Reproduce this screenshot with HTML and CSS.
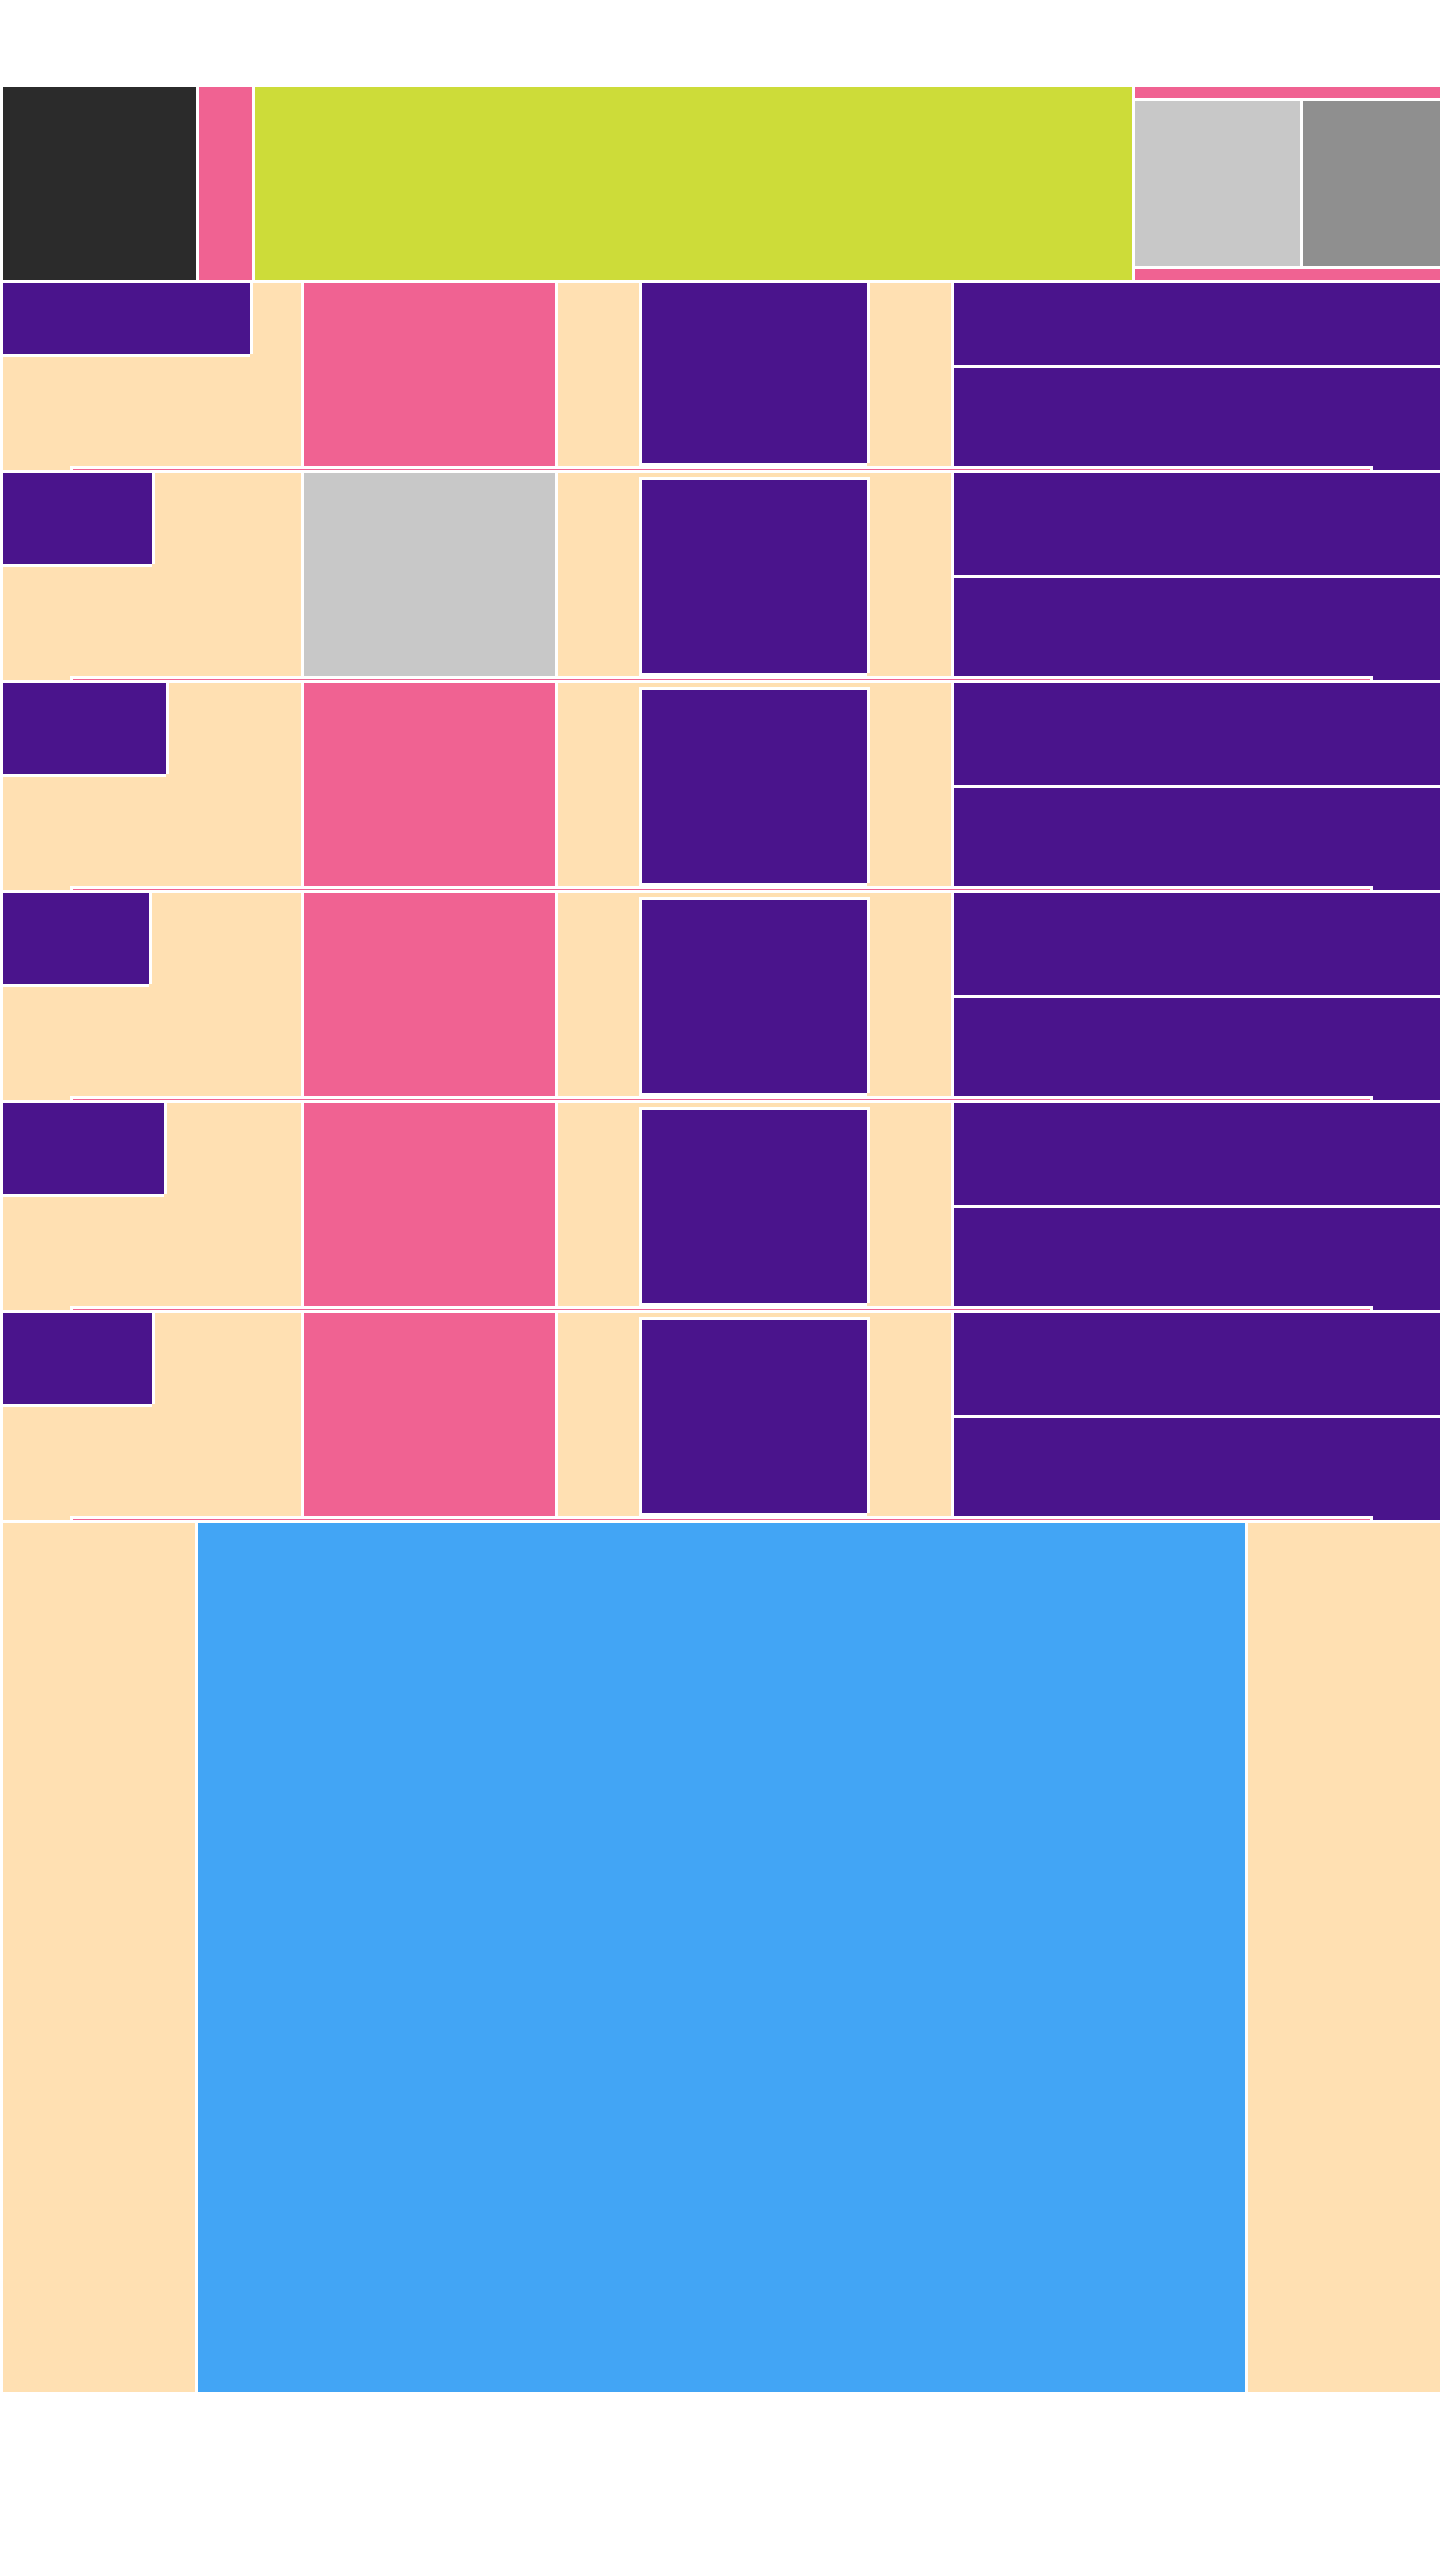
FILE: index.html
```html
<!DOCTYPE html>
<html lang="en">
<head>
  <meta charset="UTF-8">
  <meta name="viewport" content="width=device-width, initial-scale=1.0">
  <title>Board</title>
  <link rel="stylesheet" href="styles.css">
</head>
<body>
  <header class="header">
    <div class="logo"></div>
    <div class="tab"></div>
    <div class="banner"></div>
    <div class="side">
      <div class="side-bar"></div>
      <div class="side-thumbs">
        <div class="thumb-light"></div>
        <div class="thumb-dark"></div>
      </div>
      <div class="side-bar"></div>
    </div>
  </header>

  <main class="list">
    <div class="row row-first">
      <div class="info"><div class="tag tag-1"></div></div>
      <div class="thumb"></div>
      <div class="media-cell"><div class="media"></div></div>
      <div class="meta"><div class="meta-top"></div><div class="meta-bottom"></div></div>
      <div class="divider"></div>
    </div>
    <div class="row">
      <div class="info"><div class="tag tag-2"></div></div>
      <div class="thumb thumb-empty"></div>
      <div class="media-cell"><div class="media"></div></div>
      <div class="meta"><div class="meta-top"></div><div class="meta-bottom"></div></div>
      <div class="divider"></div>
    </div>
    <div class="row">
      <div class="info"><div class="tag tag-3"></div></div>
      <div class="thumb"></div>
      <div class="media-cell"><div class="media"></div></div>
      <div class="meta"><div class="meta-top"></div><div class="meta-bottom"></div></div>
      <div class="divider"></div>
    </div>
    <div class="row">
      <div class="info"><div class="tag tag-4"></div></div>
      <div class="thumb"></div>
      <div class="media-cell"><div class="media"></div></div>
      <div class="meta"><div class="meta-top"></div><div class="meta-bottom"></div></div>
      <div class="divider"></div>
    </div>
    <div class="row">
      <div class="info"><div class="tag tag-5"></div></div>
      <div class="thumb"></div>
      <div class="media-cell"><div class="media"></div></div>
      <div class="meta"><div class="meta-top"></div><div class="meta-bottom"></div></div>
      <div class="divider"></div>
    </div>
    <div class="row">
      <div class="info"><div class="tag tag-2"></div></div>
      <div class="thumb"></div>
      <div class="media-cell"><div class="media"></div></div>
      <div class="meta"><div class="meta-top"></div><div class="meta-bottom"></div></div>
      <div class="divider"></div>
    </div>
  </main>

  <footer class="footer">
    <div class="footer-side"></div>
    <div class="footer-main"></div>
    <div class="footer-side footer-fill"></div>
  </footer>
</body>
</html>
```

FILE: styles.css
```css
body {
  margin: 0;
  padding: 87px 0 0 3px;
  background-color: #ffffff;
  font-family: "Liberation Sans", Arial, sans-serif;
}

/* header */
.header {
  display: flex;
  gap: 3px;
  height: 193px;
  margin-bottom: 3px;
}

.logo {
  width: 193px;
  background: #2b2b2b;
}

.tab {
  width: 53px;
  background: #f06292;
}

.banner {
  width: 877px;
  background: #cddc39;
}

.side {
  flex: 1;
  display: flex;
  flex-direction: column;
  gap: 3px;
}

.side-bar {
  height: 11px;
  background: #f06292;
}

.side-thumbs {
  flex: 1;
  display: flex;
  gap: 3px;
}

.thumb-light {
  width: 165px;
  background: #c8c8c8;
}

.thumb-dark {
  flex: 1;
  background: #8f8f8f;
}

/* rows */
.list {
  display: flex;
  flex-direction: column;
  gap: 3px;
  margin-bottom: 3px;
}

.row {
  position: relative;
  display: flex;
  gap: 3px;
  height: 207px;
}

.row-first {
  height: 187px;
}

.info {
  width: 298px;
  background: #ffe0b2;
}

.tag {
  height: 91px;
  background: #4a148c;
  box-shadow: 3px 0 0 #ffffff, 0 3px 0 #ffffff;
}

.row-first .tag {
  height: 71px;
}

.tag-1 { width: 247px; }
.tag-2 { width: 149px; }
.tag-3 { width: 163px; }
.tag-4 { width: 146px; }
.tag-5 { width: 161px; }

.thumb {
  width: 251px;
  background: #f06292;
}

.thumb-empty {
  background: #c8c8c8;
}

.media-cell {
  width: 312px;
  padding-left: 81px;
  background: #ffe0b2;
}

.media {
  width: 225px;
  height: 193px;
  margin-top: 4px;
  background: #4a148c;
  border-left: 3px solid #ffffff;
  border-top: 3px solid #ffffff;
  box-shadow: 3px 0 0 #ffffff, 0 3px 0 #ffffff;
}

.row-first .media {
  height: 180px;
  margin-top: 0;
  border-top: 0;
}

.meta {
  flex: 1;
  display: flex;
  flex-direction: column;
  gap: 3px;
}

.meta-top {
  flex: 1;
  background: #4a148c;
}

.meta-bottom {
  height: 102px;
  background: #4a148c;
}

.divider {
  position: absolute;
  left: 67px;
  right: 67px;
  bottom: 0;
  height: 1px;
  background: #f06292;
  border: 3px solid #ffffff;
  border-bottom: 0;
}

/* footer */
.footer {
  display: flex;
  gap: 3px;
  height: 869px;
}

.footer-side {
  width: 192px;
  background: #ffe0b2;
}

.footer-fill {
  flex: 1;
}

.footer-main {
  width: 1047px;
  background: #42a5f5;
}
```
